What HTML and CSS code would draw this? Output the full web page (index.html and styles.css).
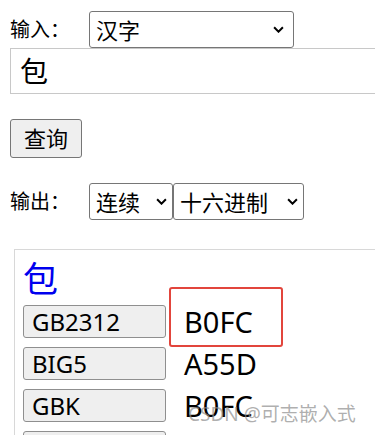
FILE: index.html
```html
<!DOCTYPE html>
<html lang="zh">
  <head>
    <meta charset="UTF-8" />
    <meta name="viewport" content="width=device-width, initial-scale=1.0" />
    <title>汉字编码查询</title>
    <link rel="stylesheet" href="styles.css">
  </head>
  <body>
    <div class="page">
      <div class="row row-input">
        <span class="label">输入：</span>
        <div class="select select-type">
          <span>汉字</span>
          <svg class="arrow" viewBox="0 0 10 6"><path d="M1 1l4 4 4-4" /></svg>
        </div>
      </div>
      <div class="text-box">包</div>

      <div class="btn-query">查询</div>

      <div class="row row-output">
        <span class="label">输出：</span>
        <div class="select select-mode">
          <span>连续</span>
          <svg class="arrow" viewBox="0 0 10 6"><path d="M1 1l4 4 4-4" /></svg>
        </div>
        <div class="select select-radix">
          <span>十六进制</span>
          <svg class="arrow" viewBox="0 0 10 6"><path d="M1 1l4 4 4-4" /></svg>
        </div>
      </div>

      <div class="result">
        <div class="result-char">包</div>
        <div class="result-list">
          <div class="result-row">
            <div class="code-btn">GB2312</div>
            <div class="code-val">B0FC</div>
            <div class="mark"></div>
          </div>
          <div class="result-row">
            <div class="code-btn">BIG5</div>
            <div class="code-val">A55D</div>
          </div>
          <div class="result-row">
            <div class="code-btn">GBK</div>
            <div class="code-val">B0FC</div>
          </div>
          <div class="result-row">
            <div class="code-btn"></div>
          </div>
        </div>
        <div class="watermark">CSDN @可志嵌入式</div>
      </div>
    </div>
  </body>
</html>
```

FILE: styles.css
```css
html, body {
  margin: 0;
  height: 100%;
  overflow: hidden;
  background: #fff;
}
.page {
  padding: 11px 0 0 10px;
  font-family: "Noto Sans", "Noto Sans CJK SC", sans-serif;
  color: #000;
}
.row {
  display: flex;
  align-items: center;
}
.label {
  width: 79px;
  font-size: 20px;
  line-height: 24px;
}
.select {
  box-sizing: border-box;
  height: 37px;
  border: 1px solid #767676;
  border-radius: 3px;
  display: flex;
  align-items: center;
  justify-content: space-between;
  padding: 0 6px 0 6px;
  font-size: 22px;
}
.select span {
  line-height: 1;
}
.arrow {
  width: 11px;
  height: 7px;
  fill: none;
  stroke: #000;
  stroke-width: 1.8;
}
.select-type {
  width: 205px;
  padding-right: 9px;
}
.select-mode {
  width: 84px;
  padding-right: 5px;
}
.select-radix {
  width: 131px;
  padding-right: 5px;
}
.text-box {
  box-sizing: border-box;
  width: 365px;
  height: 46px;
  border: 1px solid #c8c8c8;
  border-right: none;
  padding-left: 9px;
  font-size: 28px;
  line-height: 44px;
}
.btn-query {
  box-sizing: border-box;
  margin-top: 25px;
  width: 72px;
  height: 39px;
  border: 1px solid #767676;
  border-radius: 3px;
  background: #efefef;
  font-size: 22px;
  line-height: 36px;
  text-align: center;
}
.row-output {
  margin-top: 25px;
}
.result {
  position: relative;
  box-sizing: border-box;
  margin: 29px 0 0 4px;
  width: 361px;
  height: 200px;
  border: 1px solid #d8d8d8;
  border-right: none;
  padding: 10px 0 0 8px;
}
.result-char {
  color: #0000ee;
  font-size: 35px;
  line-height: 38px;
  height: 45px;
}
.result-list {
  display: flex;
  flex-direction: column;
  gap: 9px;
}
.result-row {
  position: relative;
  display: flex;
  align-items: center;
}
.code-btn {
  box-sizing: border-box;
  width: 143px;
  height: 33px;
  border: 1px solid #8f8f8f;
  border-radius: 3px;
  background: #efefef;
  padding-left: 8px;
  font-size: 24px;
  line-height: 31px;
}
.code-val {
  margin-left: 18px;
  font-size: 29px;
  line-height: 32px;
}
.mark {
  position: absolute;
  left: 146px;
  top: -18px;
  width: 114px;
  height: 60px;
  box-sizing: border-box;
  border: 2px solid #e2453c;
  border-radius: 3px;
}
.watermark {
  position: absolute;
  left: 173px;
  top: 154px;
  font-size: 19px;
  line-height: 20px;
  color: rgba(140, 140, 140, 0.7);
}
```
